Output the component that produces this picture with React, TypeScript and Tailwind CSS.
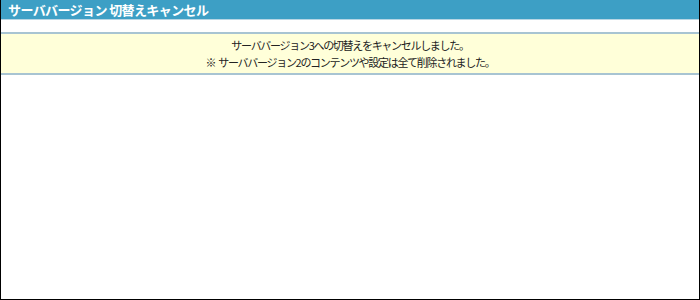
export default function App() {
  return (
    <div className="w-[700px] h-[300px] flex flex-col bg-white border-x border-b border-black font-['Noto_Sans_CJK_JP',sans-serif]">
      <div className="h-[20px] bg-[#3d9fc5] border-b border-[#b8d6e4] px-[7px] flex items-center">
        <span className="text-white font-bold text-[13px] leading-none tracking-[-0.6px]">
          サーババージョン 切替えキャンセル
        </span>
      </div>
      <div className="h-[12px]" />
      <div className="h-[43px] bg-[#ffffd9] border-y-2 border-[#a8c4d2] flex flex-col items-center justify-center gap-[5px] text-[11px] leading-[12px] tracking-[-1.3px] text-[#222]">
        <p>サーババージョン3への切替えをキャンセルしました。</p>
        <p>
          <span className="mr-[3px]">※</span>サーババージョン2のコンテンツや設定は全て削除されました。
        </p>
      </div>
      <div className="flex-1" />
    </div>
  );
}
